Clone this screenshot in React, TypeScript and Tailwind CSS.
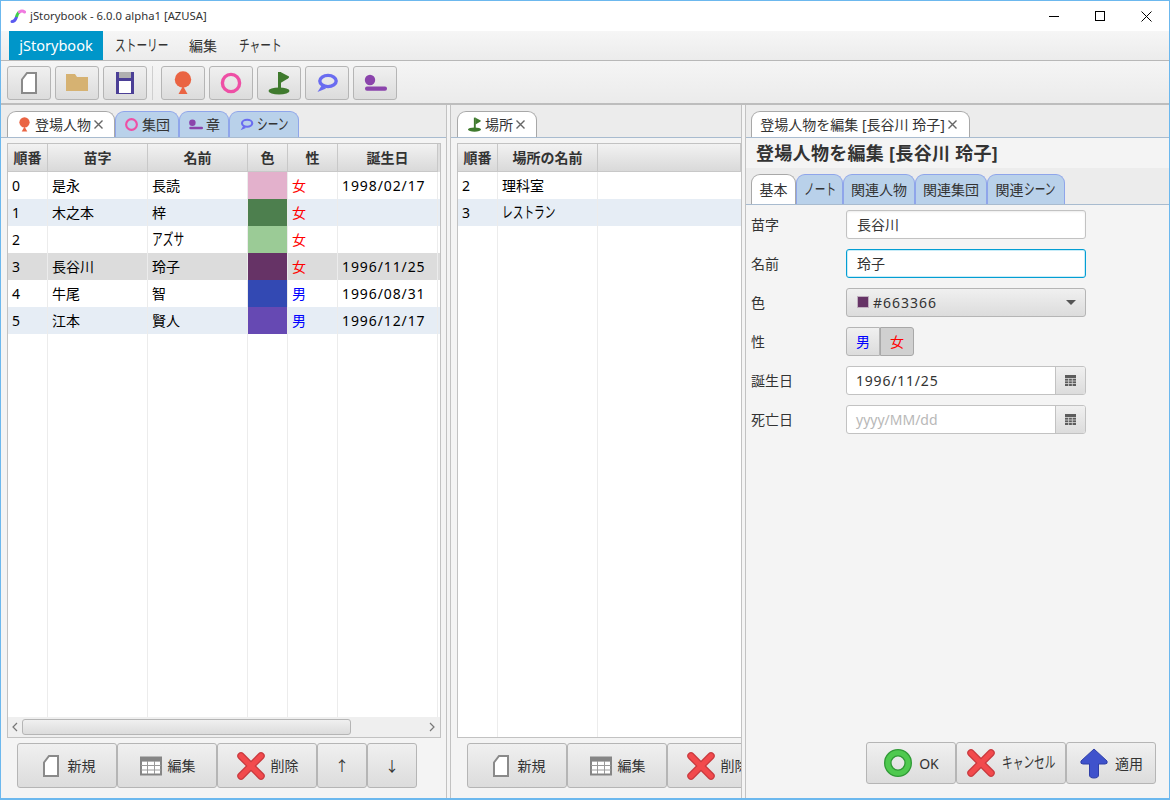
import React from "react";

const FONT = "font-['Noto_Sans','Noto_Sans_CJK_JP',sans-serif]";
const btn = "border border-[#b5b5b5] rounded-[3px] bg-gradient-to-b from-[#f0f0f0] to-[#dcdcdc] flex items-center justify-center shrink-0";

// kana in the original font are tall and narrow, so squeeze them into a fixed width
const Kana = ({ w, children }: { w: string; children: string }) => (
  <span className={`${w} inline-block shrink-0 origin-left scale-x-[0.69] text-[15.5px] whitespace-nowrap`}>{children}</span>
);

const PersonIcon = ({ s = 24 }: { s?: number }) => (
  <svg width={s} height={s} viewBox="0 0 24 24"><circle cx="12" cy="8.5" r="8.2" fill="#ea6443" /><path d="M12 15 L16.5 23 H7.5 Z" fill="#ea6443" /></svg>
);
const RingIcon = ({ s = 24 }: { s?: number }) => (
  <svg width={s} height={s} viewBox="0 0 24 24"><circle cx="12" cy="12" r="8.6" fill="none" stroke="#ee4fa5" strokeWidth="3.4" /></svg>
);
const FlagIcon = ({ s = 24 }: { s?: number }) => (
  <svg width={s} height={s} viewBox="0 0 24 24"><ellipse cx="12" cy="20" rx="10.5" ry="3.4" fill="#3f7a2e" /><rect x="11" y="1" width="3" height="19" fill="#3f7a2e" /><path d="M13.5 1 L22 5.5 Q22.5 6.5 21 7.5 L13.5 12 Z" fill="#3f7a2e" /></svg>
);
const BubbleIcon = ({ s = 24 }: { s?: number }) => (
  <svg width={s} height={s} viewBox="0 0 24 24"><ellipse cx="13" cy="10" rx="8.2" ry="5.6" fill="none" stroke="#6a6cf0" strokeWidth="3.4" /><path d="M7 14 L2.5 21 L11 17.5 Z" fill="#6a6cf0" /></svg>
);
const ChapterIcon = ({ s = 24 }: { s?: number }) => (
  <svg width={s} height={s} viewBox="0 0 24 24"><circle cx="7" cy="9" r="5.2" fill="#8b44ac" /><rect x="2" y="15.5" width="22" height="4.2" rx="2" fill="#8b44ac" /></svg>
);
const PageIcon = ({ s = 24 }: { s?: number }) => (
  <svg width={s} height={s} viewBox="0 0 24 24"><path d="M10 2 H19 V22 H5 V8.5 Z" fill="#fff" stroke="#8a8a8a" strokeWidth="2" /></svg>
);
const FolderIcon = () => (
  <svg width="24" height="24" viewBox="0 0 24 24"><path d="M1 3 H10 L12 6 H23 V20 H1 Z" fill="#d6b272" /></svg>
);
const SaveIcon = () => (
  <svg width="24" height="24" viewBox="0 0 24 24"><rect x="3" y="1" width="18" height="22" fill="#4b3f96" /><rect x="6" y="1" width="12" height="6" fill="#b0b0b0" /><rect x="6" y="10" width="12" height="12" fill="#fff" /></svg>
);
const TableIcon = () => (
  <svg width="24" height="24" viewBox="0 0 24 24"><rect x="2" y="3.5" width="20" height="17" fill="#fff" stroke="#858585" strokeWidth="2" /><rect x="2" y="4" width="20" height="3.6" fill="#858585" /><path d="M2 11.5 H22 M2 16 H22 M8.5 7 V20 M15.5 7 V20" stroke="#9a9a9a" strokeWidth="1" /></svg>
);
const CrossIcon = () => (
  <svg width="30" height="30" viewBox="0 0 30 30"><path d="M5 5 L25 25 M25 5 L5 25" stroke="#c93a3f" strokeWidth="7.5" strokeLinecap="round" /><path d="M5 5 L25 25 M25 5 L5 25" stroke="#f24a4d" strokeWidth="5" strokeLinecap="round" /></svg>
);
const OkIcon = () => (
  <svg width="30" height="30" viewBox="0 0 30 30"><circle cx="15" cy="15" r="10.2" fill="none" stroke="#2f9a35" strokeWidth="7.6" /><circle cx="15" cy="15" r="10.2" fill="none" stroke="#4fc94f" strokeWidth="5" /></svg>
);
const ApplyIcon = () => (
  <svg width="30" height="32" viewBox="0 0 30 32"><path d="M15 2 L28 14 Q29 17 26 17 H19.5 V28 Q19.5 31 15 31 Q10.5 31 10.5 28 V17 H4 Q1 17 2 14 Z" fill="#3f52cc" stroke="#2f3fa8" strokeWidth="1" /></svg>
);
const CalIcon = () => (
  <svg width="11" height="11" viewBox="0 0 11 11"><rect width="11" height="11" fill="#5c5c5c" /><path d="M0 3.5 H11 M0 6 H11 M0 8.5 H11 M3.6 3 V11 M7.3 3 V11" stroke="#d8d8d8" strokeWidth="0.8" /></svg>
);

const Tab = ({ w, active, children }: { w: string; active?: boolean; children: React.ReactNode }) => (
  <div className={`${w} h-full flex items-center justify-center gap-[3px] rounded-t-[9px] border border-b-0 text-[14px] text-[#333] shrink-0 ${active ? "bg-white border-[#a8a8a8]" : "bg-[#b9d1ea] border-[#8fa5ea]"}`}>
    {children}
  </div>
);

const Close = () => (
  <svg width="9" height="9" viewBox="0 0 9 9" className="shrink-0"><path d="M0.5 0.5 L8.5 8.5 M8.5 0.5 L0.5 8.5" stroke="#666" strokeWidth="1.4" /></svg>
);

const ActionButton = ({ w, icon, label }: { w: string; icon?: React.ReactNode; label: string }) => (
  <div className={`${btn} ${w} h-[45px] gap-[5px] text-[14px] text-[#333]`}>
    {icon}
    <span>{label}</span>
  </div>
);

const people: { no: string; last: string; first: React.ReactNode; color: string; sex: string; birth: string }[] = [
  { no: "0", last: "是永", first: "長読", color: "#e3b1cc", sex: "女", birth: "1998/02/17" },
  { no: "1", last: "木之本", first: "梓", color: "#4d7f4e", sex: "女", birth: "" },
  { no: "2", last: "", first: <Kana w="w-[34px]">アズサ</Kana>, color: "#9bcb96", sex: "女", birth: "" },
  { no: "3", last: "長谷川", first: "玲子", color: "#663366", sex: "女", birth: "1996/11/25" },
  { no: "4", last: "牛尾", first: "智", color: "#3349b3", sex: "男", birth: "1996/08/31" },
  { no: "5", last: "江本", first: "賢人", color: "#6649b3", sex: "男", birth: "1996/12/17" },
];

const Head = ({ w, children }: { w: string; children?: React.ReactNode }) => (
  <div className={`${w} shrink-0 h-full flex items-center justify-center font-bold text-[14px] text-[#333] border-r border-b border-[#c8c8c8] bg-gradient-to-b from-[#f2f2f2] to-[#d9d9d9]`}>{children}</div>
);

const Cell = ({ w, className = "text-black", children }: { w: string; className?: string; children?: React.ReactNode }) => (
  <div className={`${w} shrink-0 h-full pl-1 flex items-center border-r border-[#ececec] text-[14px] ${className}`}>{children}</div>
);

const PeopleTable = () => (
  <div className="flex-1 min-h-0 flex flex-col border border-[#c2c2c2] bg-white overflow-hidden">
    <div className="flex h-[28px] shrink-0 bg-[#dedede]">
      <Head w="w-[40px]">順番</Head>
      <Head w="w-[100px]">苗字</Head>
      <Head w="w-[100px]">名前</Head>
      <Head w="w-[40px]">色</Head>
      <Head w="w-[50px]">性</Head>
      <Head w="w-[100px]">誕生日</Head>
    </div>
    <div className="flex-1 min-h-0 overflow-hidden">
      {Array.from({ length: 21 }).map((_, i) => {
        const p = people[i];
        const bg = i === 3 ? "bg-[#dcdcdc]" : p && i % 2 === 1 ? "bg-[#e6edf5]" : "bg-white";
        return (
          <div key={i} className={`flex h-[27px] ${bg}`}>
            <Cell w="w-[40px]">{p?.no}</Cell>
            <Cell w="w-[100px]">{p?.last}</Cell>
            <Cell w="w-[100px]">{p?.first}</Cell>
            <div className="w-[40px] shrink-0 h-full border-r border-[#ececec]">
              {p && <div className="h-full w-[39px]" style={{ backgroundColor: p.color }} />}
            </div>
            <Cell w="w-[50px]" className={p?.sex === "男" ? "text-[#0000ff]" : "text-[#ff0000]"}>{p?.sex}</Cell>
            <Cell w="w-[100px]" className="text-black tracking-[0.9px]">{p?.birth}</Cell>
          </div>
        );
      })}
    </div>
    <div className="h-[20px] shrink-0 flex items-center bg-[#efefef] px-[1px]">
      <svg width="12" height="12" viewBox="0 0 12 12" className="shrink-0"><path d="M8 2 L4 6 L8 10" fill="none" stroke="#777" strokeWidth="1.2" /></svg>
      <div className="w-[329px] h-[16px] ml-[1px] rounded-[3px] border border-[#b5b5b5] bg-gradient-to-b from-[#f0f0f0] to-[#dcdcdc]" />
      <div className="flex-1" />
      <svg width="12" height="12" viewBox="0 0 12 12" className="shrink-0 mr-[1px]"><path d="M4 2 L8 6 L4 10" fill="none" stroke="#777" strokeWidth="1.2" /></svg>
    </div>
  </div>
);

const PlaceTable = () => (
  <div className="flex-1 min-h-0 flex flex-col border border-r-0 border-[#c2c2c2] bg-white overflow-hidden">
    <div className="flex h-[28px] shrink-0">
      <Head w="w-[40px]">順番</Head>
      <Head w="w-[100px]">場所の名前</Head>
      <Head w="flex-1" />
    </div>
    <div className="flex-1 min-h-0 overflow-hidden">
      {Array.from({ length: 22 }).map((_, i) => (
        <div key={i} className={`flex h-[27px] ${i === 1 ? "bg-[#e6edf5]" : "bg-white"}`}>
          <Cell w="w-[40px]">{i === 0 ? "2" : i === 1 ? "3" : ""}</Cell>
          <Cell w="w-[100px]">{i === 0 ? "理科室" : i === 1 ? <Kana w="w-[53px]">レストラン</Kana> : ""}</Cell>
        </div>
      ))}
    </div>
  </div>
);

const Field = ({ label, children }: { label: string; children: React.ReactNode }) => (
  <div className="flex items-center h-[30px] mb-[9px]">
    <div className="w-[95px] shrink-0 text-[14px] text-[#333]">{label}</div>
    {children}
  </div>
);

const TextBox = ({ value, focused }: { value: string; focused?: boolean }) => (
  <div className={`w-[240px] h-[29px] rounded-[3px] bg-white flex items-center pl-[10px] text-[14px] text-[#333] border ${focused ? "border-[#039ed3] shadow-[inset_0_0_0_1px_#c8ecf8]" : "border-[#c2c2c2] shadow-[inset_0_1px_2px_rgba(0,0,0,0.08)]"}`}>{value}</div>
);

const DateBox = ({ value, placeholder }: { value?: string; placeholder?: string }) => (
  <div className="w-[240px] h-[29px] rounded-[3px] bg-white border border-[#c2c2c2] flex text-[14px] overflow-hidden">
    <div className={`flex-1 flex items-center pl-[9px] ${value ? "text-[#333] tracking-[0.8px]" : "text-[#b8b8b8]"}`}>{value ?? placeholder}</div>
    <div className="w-[30px] border-l border-[#c2c2c2] bg-gradient-to-b from-[#f0f0f0] to-[#dcdcdc] flex items-center justify-center"><CalIcon /></div>
  </div>
);

export default function App() {
  return (
    <div className={`${FONT} w-[1170px] h-[800px] border border-[#6cb8ee] border-b-2 flex flex-col bg-[#f4f4f4] overflow-hidden`}>
      {/* title bar */}
      <div className="h-[30px] shrink-0 bg-white flex items-center">
        <svg width="16" height="16" viewBox="0 0 16 16" className="ml-[9px]">
          <path d="M2 13.5 Q5 13.5 6.5 9" fill="none" stroke="#5a5af0" strokeWidth="3" strokeLinecap="round" />
          <path d="M6.5 9 Q7.5 5 9.5 4" fill="none" stroke="#3ecf4a" strokeWidth="3" />
          <path d="M9.5 4 Q12 2 14.5 4" fill="none" stroke="#f07ae0" strokeWidth="3" strokeLinecap="round" />
        </svg>
        <span className="ml-[4px] text-[11.3px] text-[#333]">jStorybook - 6.0.0 alpha1 [AZUSA]</span>
        <div className="ml-auto flex items-center">
          <div className="w-[46px] flex justify-center"><div className="w-[10px] h-[1px] bg-black" /></div>
          <div className="w-[46px] flex justify-center"><div className="w-[10px] h-[10px] border border-black" /></div>
          <div className="w-[46px] flex justify-center">
            <svg width="11" height="11" viewBox="0 0 11 11"><path d="M0.5 0.5 L10.5 10.5 M10.5 0.5 L0.5 10.5" stroke="#000" strokeWidth="1" /></svg>
          </div>
        </div>
      </div>
      {/* menu bar */}
      <div className="h-[30px] shrink-0 flex items-center pl-[8px] bg-gradient-to-b from-[#f6f6f6] to-[#ececec] border-b border-[#b8b8b8] text-[14px] text-[#333]">
        <div className="w-[94px] h-full bg-[#0096c9] text-white flex items-center justify-center text-[14.5px]">jStorybook</div>
        <span className="ml-[12px] flex"><Kana w="w-[52px]">ストーリー</Kana></span>
        <span className="ml-[22px]">編集</span>
        <span className="ml-[22px] flex"><Kana w="w-[43px]">チャート</Kana></span>
      </div>
      {/* toolbar */}
      <div className="h-[44px] shrink-0 flex items-center pl-[6px] pt-[2px] gap-[4px] bg-gradient-to-b from-[#f5f5f5] to-[#ebebeb] border-b-2 border-[#bdbdbd]">
        <div className={`${btn} w-[44px] h-[34px]`}><PageIcon /></div>
        <div className={`${btn} w-[44px] h-[34px]`}><FolderIcon /></div>
        <div className={`${btn} w-[44px] h-[34px]`}><SaveIcon /></div>
        <div className="w-[1px] h-[34px] bg-[#cfcfcf] ml-[1px] mr-[4px]" />
        <div className={`${btn} w-[44px] h-[34px]`}><PersonIcon /></div>
        <div className={`${btn} w-[44px] h-[34px]`}><RingIcon /></div>
        <div className={`${btn} w-[44px] h-[34px]`}><FlagIcon /></div>
        <div className={`${btn} w-[44px] h-[34px]`}><BubbleIcon /></div>
        <div className={`${btn} w-[44px] h-[34px]`}><ChapterIcon /></div>
      </div>
      {/* panes */}
      <div className="flex-1 min-h-0 flex">
        {/* left */}
        <div className="w-[446px] shrink-0 flex flex-col border-r border-[#c2c2c2]">
          <div className="h-[33px] shrink-0 bg-[#ececec] border-b border-[#a8bbcf] flex items-end pl-[6px] pt-[6px]">
            <Tab w="w-[108px] pr-[2px]" active><PersonIcon s={15} /><span>登場人物</span><Close /></Tab>
            <Tab w="w-[64px]"><RingIcon s={15} /><span>集団</span></Tab>
            <Tab w="w-[50px]"><ChapterIcon s={15} /><span>章</span></Tab>
            <Tab w="w-[70px]"><BubbleIcon s={15} /><Kana w="w-[33px]">シーン</Kana></Tab>
          </div>
          <div className="flex-1 min-h-0 flex flex-col pt-[5px] pl-[6px] pr-[5px]">
            <PeopleTable />
            <div className="h-[60px] shrink-0 flex pt-[5px] pl-[10px]">
              <ActionButton w="w-[100px]" icon={<PageIcon />} label="新規" />
              <ActionButton w="w-[100px]" icon={<TableIcon />} label="編集" />
              <ActionButton w="w-[100px]" icon={<CrossIcon />} label="削除" />
              <ActionButton w="w-[50px]" label="↑" />
              <ActionButton w="w-[50px]" label="↓" />
            </div>
          </div>
        </div>
        {/* splitter */}
        <div className="w-[4px] shrink-0 border-r border-[#c2c2c2]" />
        {/* middle */}
        <div className="w-[291px] shrink-0 flex flex-col border-r border-[#c2c2c2] overflow-hidden">
          <div className="h-[33px] shrink-0 bg-[#ececec] border-b border-[#a8bbcf] flex items-end pl-[6px] pt-[6px]">
            <Tab w="w-[80px] pr-[2px]" active><FlagIcon s={15} /><span>場所</span><Close /></Tab>
          </div>
          <div className="flex-1 min-h-0 flex flex-col pt-[5px] pl-[6px]">
            <PlaceTable />
            <div className="h-[60px] shrink-0 flex pt-[5px] pl-[10px] overflow-hidden">
              <ActionButton w="w-[100px]" icon={<PageIcon />} label="新規" />
              <ActionButton w="w-[100px]" icon={<TableIcon />} label="編集" />
              <ActionButton w="w-[100px]" icon={<CrossIcon />} label="削除" />
            </div>
          </div>
        </div>
        {/* splitter */}
        <div className="w-[4px] shrink-0 border-r border-[#c2c2c2]" />
        {/* right */}
        <div className="flex-1 min-w-0 flex flex-col">
          <div className="h-[33px] shrink-0 bg-[#ececec] border-b border-[#a8bbcf] flex items-end pl-[5px] pt-[6px]">
            <Tab w="w-[219px] pr-[4px]" active><span>登場人物を編集 [長谷川 玲子]</span><Close /></Tab>
          </div>
          <div className="h-[30px] shrink-0 flex items-center pl-[10px] text-[18px] font-bold text-[#333] tracking-[0.3px]">登場人物を編集 [長谷川 玲子]</div>
          <div className="h-[37px] shrink-0 bg-[#ececec] border-b border-[#a8bbcf] flex items-end pl-[5px] pt-[6px]">
            <Tab w="w-[45px]" active>基本</Tab>
            <Tab w="w-[47px]"><Kana w="w-[32px]">ノート</Kana></Tab>
            <Tab w="w-[72px]">関連人物</Tab>
            <Tab w="w-[72px]">関連集団</Tab>
            <Tab w="w-[78px]"><span className="flex items-center">関連<Kana w="w-[33px]">シーン</Kana></span></Tab>
          </div>
          <div className="flex-1 min-h-0 flex flex-col pt-[4px] pl-[5px] pr-[13px]">
            <Field label="苗字"><TextBox value="長谷川" /></Field>
            <Field label="名前"><TextBox value="玲子" focused /></Field>
            <Field label="色">
              <div className={`${btn} w-[240px] h-[29px] !justify-start pl-[10px] text-[14px] text-[#333]`}>
                <div className="w-[12px] h-[12px] bg-[#663366] border border-[#c0b0c0] mr-[4px]" />
                <span className="tracking-[1px]">#663366</span>
                <div className="ml-auto mr-[9px] w-0 h-0 border-l-[5px] border-r-[5px] border-t-[5px] border-l-transparent border-r-transparent border-t-[#555]" />
              </div>
            </Field>
            <Field label="性">
              <div className={`${btn} w-[34px] h-[29px] text-[14px] text-[#0000ff] rounded-r-none`}>男</div>
              <div className="w-[34px] h-[29px] rounded-r-[3px] border border-[#a8a8a8] bg-[#d0d0d0] flex items-center justify-center text-[14px] text-[#ff0000]">女</div>
            </Field>
            <Field label="誕生日"><DateBox value="1996/11/25" /></Field>
            <Field label="死亡日"><DateBox placeholder="yyyy/MM/dd" /></Field>
            <div className="mt-auto mb-[14px] flex justify-end">
              <div className={`${btn} w-[90px] h-[42px] gap-[6px] text-[14px] text-[#333]`}><OkIcon /><span>OK</span></div>
              <div className={`${btn} w-[110px] h-[42px] gap-[6px] text-[14px] text-[#333]`}><CrossIcon /><Kana w="w-[54px]">キャンセル</Kana></div>
              <div className={`${btn} w-[90px] h-[42px] gap-[6px] text-[14px] text-[#333]`}><ApplyIcon /><span>適用</span></div>
            </div>
          </div>
        </div>
      </div>
    </div>
  );
}
